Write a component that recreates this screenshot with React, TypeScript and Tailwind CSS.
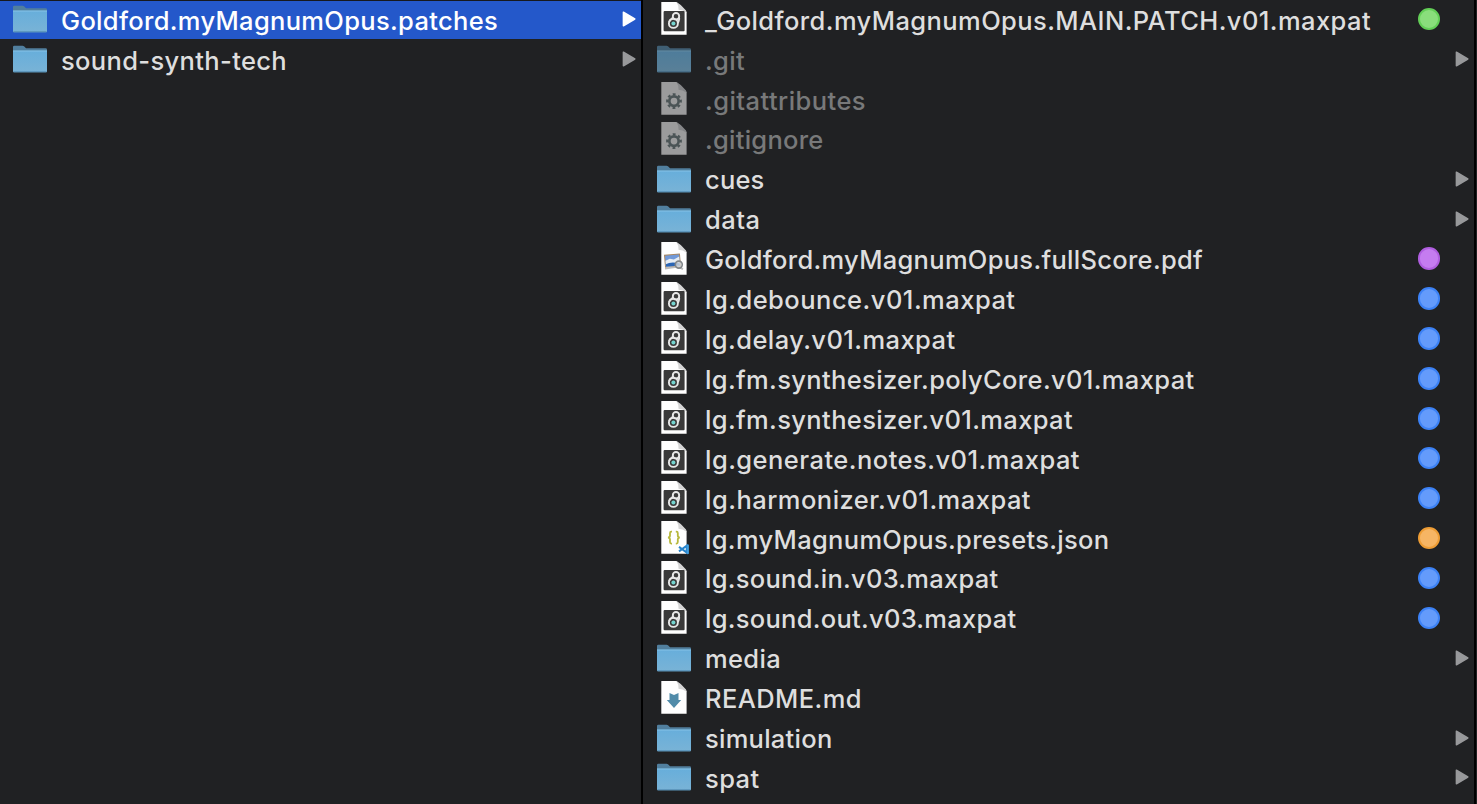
type Kind = 'folder' | 'max' | 'gear' | 'pdf' | 'json' | 'md';
type Entry = { name: string; kind: Kind; width: number; tag?: keyof typeof tags; dim?: boolean; selected?: boolean };

const tags = {
  green: 'bg-[#8ade7c] border-[#63cf57]',
  purple: 'bg-[#c57cf0] border-[#b05ee0]',
  blue: 'bg-[#649bfb] border-[#3c82f6]',
  orange: 'bg-[#f6b564] border-[#ee9d35]',
};

const left: Entry[] = [
  { name: 'Goldford.myMagnumOpus.patches', kind: 'folder', width: 436, selected: true },
  { name: 'sound-synth-tech', kind: 'folder', width: 225 },
];

const right: Entry[] = [
  { name: '_Goldford.myMagnumOpus.MAIN.PATCH.v01.maxpat', kind: 'max', width: 665, tag: 'green' },
  { name: '.git', kind: 'folder', width: 39, dim: true },
  { name: '.gitattributes', kind: 'gear', width: 160, dim: true },
  { name: '.gitignore', kind: 'gear', width: 117.5, dim: true },
  { name: 'cues', kind: 'folder', width: 58.5 },
  { name: 'data', kind: 'folder', width: 54.5 },
  { name: 'Goldford.myMagnumOpus.fullScore.pdf', kind: 'pdf', width: 497, tag: 'purple' },
  { name: 'lg.debounce.v01.maxpat', kind: 'max', width: 309.5, tag: 'blue' },
  { name: 'lg.delay.v01.maxpat', kind: 'max', width: 249.5, tag: 'blue' },
  { name: 'lg.fm.synthesizer.polyCore.v01.maxpat', kind: 'max', width: 488.5, tag: 'blue' },
  { name: 'lg.fm.synthesizer.v01.maxpat', kind: 'max', width: 367, tag: 'blue' },
  { name: 'lg.generate.notes.v01.maxpat', kind: 'max', width: 374, tag: 'blue' },
  { name: 'lg.harmonizer.v01.maxpat', kind: 'max', width: 325, tag: 'blue' },
  { name: 'lg.myMagnumOpus.presets.json', kind: 'json', width: 403.5, tag: 'orange' },
  { name: 'lg.sound.in.v03.maxpat', kind: 'max', width: 292.5, tag: 'blue' },
  { name: 'lg.sound.out.v03.maxpat', kind: 'max', width: 310.5, tag: 'blue' },
  { name: 'media', kind: 'folder', width: 75 },
  { name: 'README.md', kind: 'md', width: 156 },
  { name: 'simulation', kind: 'folder', width: 126.5 },
  { name: 'spat', kind: 'folder', width: 53.5 },
];

function tracking(name: string, width: number) {
  const ctx = document.createElement('canvas').getContext('2d');
  if (!ctx) return 0;
  ctx.font = '500 25.5px Inter';
  return (width + 1 - ctx.measureText(name).width) / name.length;
}

function Folder({ dim }: { dim?: boolean }) {
  return (
    <svg width="34" height="28" viewBox="0 0 34 28" className={dim ? 'opacity-65' : ''}>
      <defs>
        <linearGradient id="folder" x1="0" y1="0" x2="0" y2="1">
          <stop offset="0" stopColor="#67aedb" />
          <stop offset="1" stopColor="#79b3d6" />
        </linearGradient>
      </defs>
      <path d="M0 6V2Q0 .8 1.2 .8H9.5Q10.5 .8 11.3 1.6L13 3.2H32.6Q34 3.2 34 4.6V8H0Z" fill="#517f9e" />
      <path d="M0 5.8H34V26.3Q34 27.3 33 27.3H1Q0 27.3 0 26.3Z" fill="url(#folder)" />
      <path d="M0 6H34" stroke="#85c2e7" strokeWidth="1" />
      <path d="M.5 26.8H33.5" stroke="#538eb4" strokeWidth="1" />
    </svg>
  );
}

function Glyph({ kind }: { kind: Kind }) {
  if (kind === 'max')
    return (
      <>
        <rect x="2.6" y="9.4" width="21" height="20.2" rx="1" fill="#3a3a3a" />
        <g fill="none" stroke="#e8e8e8" strokeWidth="1.9">
          <circle cx="12.4" cy="21.8" r="4.5" />
          <circle cx="15" cy="14.6" r="3.2" />
          <path d="M8.2 20.2C8.8 17.6 11 17 12.2 16M17 21.4C17.2 19.4 19 18.2 18 15.8" />
        </g>
        <circle cx="12.4" cy="21.8" r="2" fill="#74d5d0" />
      </>
    );
  if (kind === 'gear')
    return (
      <g fill="none" stroke="#4b5456">
        <circle cx="13" cy="19.5" r="4.7" strokeWidth="2.7" />
        <circle cx="13" cy="19.5" r="6.8" strokeWidth="2.2" strokeDasharray="2.8 2.54" transform="rotate(-12 13 19.5)" />
      </g>
    );
  if (kind === 'pdf')
    return (
      <>
        <g transform="rotate(-5 11 19)">
          <rect x="3.5" y="12.5" width="16" height="13" fill="#a88761" />
          <rect x="4.5" y="13.5" width="14" height="11" fill="#7199d8" />
          <path d="M4.5 18.5L9 17L13 18L18.5 15.5V24.5H4.5Z" fill="#e7edf3" />
          <path d="M4.5 22Q10 19.5 18.5 22.5V24.5H4.5Z" fill="#2a65b5" />
        </g>
        <path d="M4 27L17 25L22 27.5" fill="none" stroke="#bbb" strokeWidth="1.8" />
        <circle cx="17.8" cy="23" r="3.5" fill="#d2d6d9" fillOpacity=".8" stroke="#818588" strokeWidth="1.6" />
      </>
    );
  if (kind === 'json')
    return (
      <>
        <g fill="none" stroke="#b7b83c" strokeWidth="1.8">
          <path d="M11 11H10.3Q9 11 9 12.5V15Q9 16.8 7 17Q9 17.2 9 19V21.5Q9 23 10.3 23H11" />
          <path d="M14.8 11H15.5Q16.8 11 16.8 12.5V15Q16.8 16.8 18.8 17Q16.8 17.2 16.8 19V21.5Q16.8 23 15.5 23H14.8" />
        </g>
        <path d="M18 26.3L25.7 32V25.2L18 30.8" fill="none" stroke="#2683cb" strokeWidth="2" />
        <path d="M26.8 24V33.3" stroke="#3f9fe2" strokeWidth="2.2" />
      </>
    );
  return <path d="M8.5 12.5L13 14.5L17.5 12.5V19.5H20.2L13 27.5L5.8 19.5H8.5Z" fill="#508ba9" />;
}

function Doc({ kind }: { kind: Kind }) {
  const gear = kind === 'gear';
  return (
    <svg width="34" height="34" viewBox="-4 .4 34 34" className="overflow-visible">
      <path d="M.3 .4H15.5L25.6 10.5V33.1H.3Z" fill={gear ? '#9b9b9c' : '#fefefe'} />
      <path d="M15.5 .4Q18 4.5 17.5 8.2Q21.5 8.2 25.6 11.2L25 9Q20.5 3 15.5 .4Z" fill={gear ? '#858688' : '#d6d6d6'} />
      <Glyph kind={kind} />
    </svg>
  );
}

function Row({ entry }: { entry: Entry }) {
  const { name, kind, width, tag, dim, selected } = entry;
  const color = selected ? 'text-white' : dim ? 'text-[#78797a]' : 'text-[#dedede]';
  const arrow = selected ? '#fff' : '#98999b';
  return (
    <li className="flex h-[39.92px] shrink-0 items-center">
      <span className="flex w-12 shrink-0 pb-[1.5px]">
        {kind === 'folder' ? <Folder dim={dim} /> : <Doc kind={kind} />}
      </span>
      <span className={`grow whitespace-pre pt-[1.6px] leading-9 ${color}`} style={{ letterSpacing: tracking(name, width) }}>
        {name}
      </span>
      {tag && <span className={`mb-[1.5px] mr-[34px] size-[22.5px] shrink-0 rounded-full border-2 ${tags[tag]}`} />}
      {kind === 'folder' && (
        <svg width="14" height="16" viewBox="0 0 14 16" className="mb-[1.4px] mr-[5px] shrink-0">
          <path d="M1.4 1.2V14.8L12.8 8Z" fill={arrow} stroke={arrow} strokeWidth="1.5" strokeLinejoin="round" />
        </svg>
      )}
    </li>
  );
}

export default function App() {
  return (
    <main className="flex h-[804px] w-[1477px] overflow-hidden bg-[#202123] font-['Inter',sans-serif] text-[25.5px] font-medium antialiased">
      <ul className="w-[641px] shrink-0 bg-[linear-gradient(#17191d_0_1px,#2458ca_1px_39px,transparent_39px)] pl-[13px]">
        {left.map((e) => <Row key={e.name} entry={e} />)}
      </ul>
      <div className="w-0.5 shrink-0 bg-black" />
      <ul className="w-[831px] shrink-0 pl-3.5">
        {right.map((e) => <Row key={e.name} entry={e} />)}
      </ul>
      <div className="w-0.5 shrink-0 bg-black" />
    </main>
  );
}
